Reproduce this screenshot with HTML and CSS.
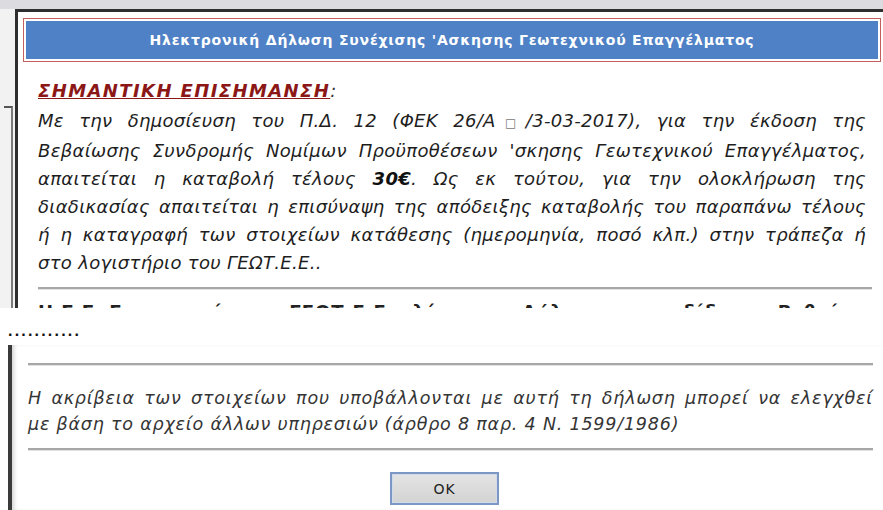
FILE: index.html
```html
<!DOCTYPE html>
<html lang="el">
<head>
<meta charset="utf-8">
<title>Ηλεκτρονική Δήλωση</title>
<link rel="stylesheet" href="styles.css">
</head>
<body>
  <section class="shot shot-top">
    <div class="backdrop">
      <div class="backdrop-rail"></div>
    </div>
    <div class="dialog">
      <div class="titlebar">
        <div class="titlebar-fill">Ηλεκτρονική Δήλωση Συνέχισης 'Ασκησης Γεωτεχνικού Επαγγέλματος</div>
      </div>
      <div class="content">
        <p class="notice-head"><span class="notice-label">ΣΗΜΑΝΤΙΚΗ ΕΠΙΣΗΜΑΝΣΗ</span>:</p>
        <div class="notice-body">
          <span class="jl">Με την δημοσίευση του Π.Δ. 12 (ΦΕΚ 26/Α<span class="box">□</span>/3-03-2017), για την έκδοση της</span>
          <span class="jl">Βεβαίωσης Συνδρομής Νομίμων Προϋποθέσεων 'σκησης Γεωτεχνικού Επαγγέλματος,</span>
          <span class="jl">απαιτείται η καταβολή τέλους <b>30€</b>. Ως εκ τούτου, για την ολοκλήρωση της</span>
          <span class="jl">διαδικασίας απαιτείται η επισύναψη της απόδειξης καταβολής του παραπάνω τέλους</span>
          <span class="jl">ή η καταγραφή των στοιχείων κατάθεσης (ημερομηνία, ποσό κλπ.) στην τράπεζα ή</span>
          <span class="ll">στο λογιστήριο του ΓΕΩΤ.Ε.Ε..</span>
        </div>
        <hr class="rule rule-top">
        <p class="cut-line">Η Γ.Γ. Γραμματεία του ΓΕΩΤ.Ε.Ε. ελέγχει τη Δήλωση και εκδίδει τη Βεβαίωση</p>
      </div>
    </div>
  </section>

  <div class="ellipsis">...........</div>

  <section class="shot shot-bottom">
    <div class="dialog-bottom">
      <hr class="rule">
      <div class="verify-text">
        <span class="jl">Η ακρίβεια των στοιχείων που υποβάλλονται με αυτή τη δήλωση μπορεί να ελεγχθεί</span>
        <span class="ll">με βάση το αρχείο άλλων υπηρεσιών (άρθρο 8 παρ. 4 Ν. 1599/1986)</span>
      </div>
      <hr class="rule rule-lower">
      <div class="actions">
        <button class="ok-btn" type="button">OK</button>
      </div>
    </div>
  </section>
</body>
</html>
```

FILE: styles.css
```css
html, body {
  margin: 0;
  padding: 0;
}

body {
  width: 883px;
  height: 510px;
  overflow: hidden;
  background: #ffffff;
  font-family: "DejaVu Sans", "Noto Sans", sans-serif;
  color: #2a2a2a;
}

/* ---------- upper capture: the dialog header and notice ---------- */

.shot-top {
  display: flex;
  height: 308px;
  box-sizing: border-box;
  padding-top: 9px;
  background: #dcdce0;
  overflow: hidden;
}

.backdrop {
  width: 15px;
  flex: none;
  background: #f2f2f2;
}

.backdrop-rail {
  margin-top: 97px;
  margin-left: 4px;
  width: 7px;
  height: 200px;
  border-top: 2px solid #555;
  border-right: 2px solid #7a7a7a;
}

.dialog {
  flex: 1;
  min-width: 0;
  background: #ffffff;
  border-top: 3px solid #2e2e2e;
  border-left: 3px solid #2e2e2e;
  padding: 6px 0 0 5px;
}

.titlebar {
  height: 44px;
  box-sizing: border-box;
  margin-right: 2px;
  padding: 2px;
  border: 1px solid #c45f5f;
  background: #ffffff;
}

.titlebar-fill {
  height: 100%;
  display: flex;
  align-items: center;
  justify-content: center;
  background: #4f81c6;
  color: #ffffff;
  font-weight: bold;
  font-size: 14px;
  letter-spacing: 0.8px;
}

.content {
  padding: 0 11px 0 15px;
}

.notice-head {
  margin: 15px 0 0;
  font-size: 18px;
  line-height: 28px;
  font-style: italic;
  color: #333;
}

.notice-label {
  color: #8b1717;
  font-weight: bold;
  text-decoration: underline;
  letter-spacing: 1.4px;
}

.notice-body {
  margin-top: 2px;
  padding-right: 6px;
  font-size: 18px;
  line-height: 28px;
  font-style: italic;
  letter-spacing: 0.3px;
  color: #1e1e1e;
}

.jl {
  display: block;
  text-align: justify;
  text-align-last: justify;
}

.ll {
  display: block;
  text-align: left;
}

.notice-body b {
  color: #111;
}

.box {
  font-size: 12px;
  font-style: normal;
  color: #777;
}

.rule {
  margin: 0;
  border: 0;
  border-top: 2px solid #a7a7a7;
  border-bottom: 1px solid #e2e2e2;
}

.rule-top {
  margin-top: 10px;
}

/* the next paragraph continues below the captured area; only its top shows */
.cut-line {
  margin: 8px 0 0;
  font-size: 18px;
  line-height: 28px;
  font-weight: bold;
  letter-spacing: 1px;
  white-space: nowrap;
  color: #222;
}

/* ---------- trailing dots between the two captures ---------- */

.ellipsis {
  height: 37px;
  box-sizing: border-box;
  padding: 15px 0 0 8px;
  font-family: "Liberation Sans", Arial, sans-serif;
  font-weight: bold;
  font-size: 16px;
  line-height: 1;
  letter-spacing: 2.2px;
  color: #111;
}

/* ---------- lower capture: verification note and button ---------- */

.shot-bottom {
  display: flex;
  height: 165px;
}

.dialog-bottom {
  flex: 1;
  margin-left: 8px;
  border-left: 4px solid #3a3a3a;
  box-shadow: inset 4px 0 4px -2px rgba(0, 0, 0, 0.18);
  padding: 18px 10px 0 16px;
}

.verify-text {
  margin-top: 19px;
  font-size: 17.5px;
  line-height: 26px;
  font-style: italic;
  letter-spacing: 0.8px;
  color: #353535;
}

.rule-lower {
  margin-top: 11px;
}

.actions {
  display: flex;
  justify-content: center;
  padding-right: 12px;
  margin-top: 21px;
}

.ok-btn {
  width: 109px;
  height: 33px;
  padding: 0;
  border: 2px solid #7d97c4;
  box-shadow: inset 0 0 0 1px #d2dbea;
  background: linear-gradient(#e4e4e4, #d3d3d3);
  font-family: "DejaVu Sans", sans-serif;
  font-size: 14px;
  letter-spacing: 1px;
  color: #222;
}
```
